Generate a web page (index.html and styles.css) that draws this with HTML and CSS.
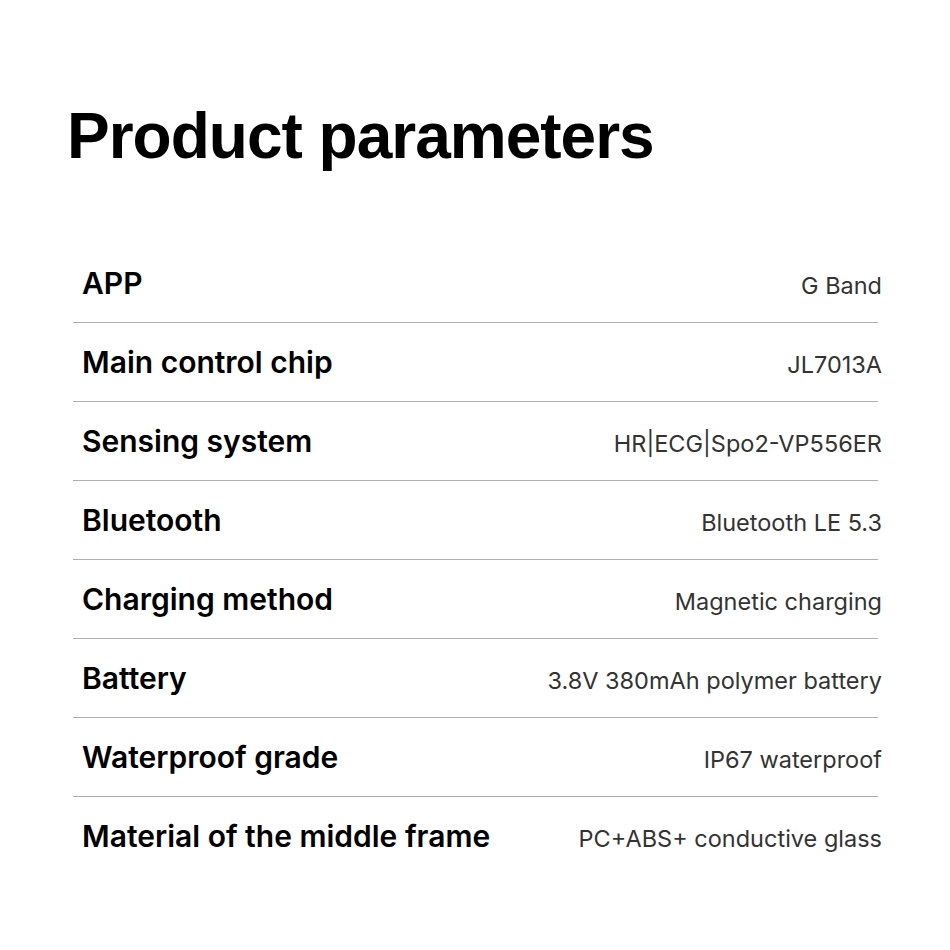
FILE: index.html
```html
<!DOCTYPE html>
<html>
<head>
<meta charset="utf-8">
<link rel="stylesheet" href="styles.css">
</head>
<body>
<main class="page">
  <h1 class="title">Product parameters</h1>
  <div class="table">
    <div class="row"><span class="label">APP</span><span class="value">G Band</span></div>
    <div class="row"><span class="label">Main control chip</span><span class="value">JL7013A</span></div>
    <div class="row"><span class="label">Sensing system</span><span class="value">HR|ECG|Spo2-VP556ER</span></div>
    <div class="row"><span class="label">Bluetooth</span><span class="value">Bluetooth LE 5.3</span></div>
    <div class="row"><span class="label">Charging method</span><span class="value">Magnetic charging</span></div>
    <div class="row"><span class="label">Battery</span><span class="value">3.8V 380mAh polymer battery</span></div>
    <div class="row"><span class="label">Waterproof grade</span><span class="value">IP67 waterproof</span></div>
    <div class="row last"><span class="label">Material of the middle frame</span><span class="value">PC+ABS+ conductive glass</span></div>
  </div>
</main>
</body>
</html>
```
FILE: styles.css
```css
html, body {
  margin: 0;
  padding: 0;
  background: #ffffff;
}
.page {
  width: 805px;
  padding-left: 73px;
}
.title {
  margin: 96px 0 68px -6px;
  font-family: "Liberation Sans", Arial, sans-serif;
  font-weight: 700;
  font-size: 64px;
  line-height: 80px;
  color: #000;
  letter-spacing: -1px;
}
.table {
  display: flex;
  flex-direction: column;
}
.row {
  box-sizing: border-box;
  height: 79px;
  border-bottom: 1px solid #b0b0b0;
  display: flex;
  align-items: baseline;
  justify-content: space-between;
  padding: 21px 0 0 9px;
}
.row.last {
  border-bottom-color: transparent;
}
.label {
  font-family: Inter, "Noto Sans", sans-serif;
  font-weight: 600;
  font-size: 30px;
  line-height: 36px;
  color: #000;
}
.value {
  font-family: Inter, "Noto Sans", sans-serif;
  font-weight: 400;
  font-size: 23.5px;
  line-height: 36px;
  color: #333;
  margin-right: -4px;
}
```
